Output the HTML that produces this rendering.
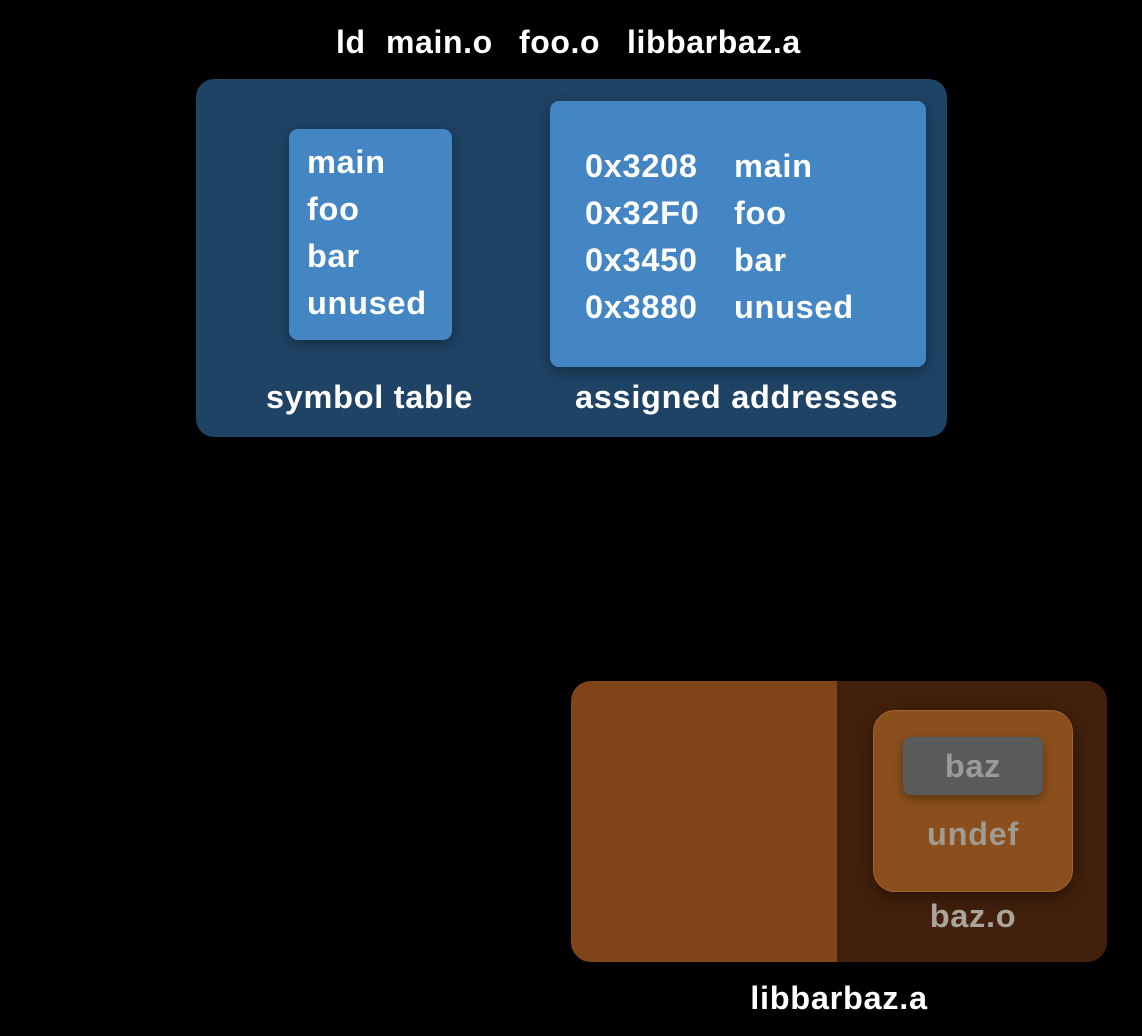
<!DOCTYPE html>
<html><head><style>
body{margin:0;width:1142px;height:1036px;background:#000;position:relative;overflow:hidden;font-family:"Liberation Sans",sans-serif;color:#fff}
.a{position:absolute}
.t{position:absolute;white-space:nowrap;font-size:32.5px;line-height:1;font-weight:bold;letter-spacing:0.7px}
.h{display:inline-block;width:149px}
.ti{position:absolute;top:26px;font-size:32px;font-weight:bold;letter-spacing:0.6px;line-height:1;white-space:nowrap}
</style></head><body>
<div class="ti" style="left:336px">ld</div>
<div class="ti" style="left:386px">main.o</div>
<div class="ti" style="left:519px">foo.o</div>
<div class="ti" style="left:627px">libbarbaz.a</div>

<div class="a" style="left:196px;top:79px;width:751px;height:358px;background:#1f4365;border-radius:18px"></div>
<div class="a" style="left:289px;top:129px;width:163px;height:211px;background:#4486c4;border-radius:9px;box-shadow:0 4px 14px rgba(0,0,0,.35)"></div>
<div class="t" style="left:307px;line-height:47px;top:139px">main<br>foo<br>bar<br>unused</div>
<div class="a" style="left:550px;top:101px;width:376px;height:266px;background:#4486c4;border-radius:9px;box-shadow:0 4px 14px rgba(0,0,0,.35)"></div>
<div class="t" style="left:585px;top:143px;line-height:47px"><span class="h">0x3208</span>main<br><span class="h">0x32F0</span>foo<br><span class="h">0x3450</span>bar<br><span class="h">0x3880</span>unused</div>
<div class="t" style="left:266px;top:381px">symbol table</div>
<div class="t" style="left:575px;top:381px">assigned addresses</div>

<div class="a" style="left:571px;top:681px;width:536px;height:281px;background:#42200b;border-radius:20px;overflow:hidden">
 <div class="a" style="left:0;top:0;width:266px;height:281px;background:#7f4519"></div>
</div>
<div class="a" style="left:873px;top:710px;width:198px;height:180px;background:#8a4f1c;border:1px solid #a0652f;border-radius:22px;box-shadow:0 6px 16px rgba(0,0,0,.4)"></div>
<div class="a" style="left:903px;top:737px;width:140px;height:58px;background:#595a5a;border-radius:8px;box-shadow:0 4px 10px rgba(0,0,0,.35)"></div>
<div class="t" style="left:903px;top:750px;width:140px;text-align:center;color:#9a9a98">baz</div>
<div class="t" style="left:873px;top:818px;width:200px;text-align:center;color:#a09a90">undef</div>
<div class="t" style="left:873px;top:900px;width:200px;text-align:center;color:#aaa59c">baz.o</div>
<div class="t" style="left:739px;top:982px;width:200px;text-align:center">libbarbaz.a</div>
</body></html>
